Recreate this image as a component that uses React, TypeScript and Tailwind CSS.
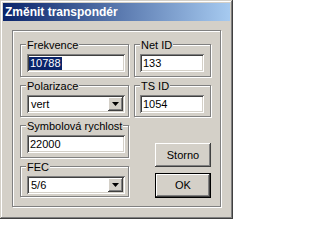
import type { ReactNode } from "react";

const etched = "border border-[#808080] shadow-[inset_1px_1px_#ffffff,1px_1px_#ffffff]";
const sunken =
  "bg-white shadow-[inset_1px_1px_#808080,inset_-1px_-1px_#ffffff,inset_2px_2px_#404040,inset_-2px_-2px_#d4d0c8]";
const raised =
  "shadow-[inset_-1px_-1px_#404040,inset_1px_1px_#ffffff,inset_-2px_-2px_#808080,inset_2px_2px_#d4d0c8]";

function Group({ label, h, children }: { label: string; h: string; children: ReactNode }) {
  return (
    <div className={`relative ${etched} ${h}`}>
      <span className="absolute -top-[6px] left-[5px] bg-[#d4d0c8] px-[1px] text-[11px] leading-[12px] text-black">
        {label}
      </span>
      {children}
    </div>
  );
}

function Edit({ value, w, ml, selected }: { value: string; w: string; ml: string; selected?: boolean }) {
  return (
    <div className={`${sunken} ${w} ${ml} mt-[9px] flex h-[18px] items-center pl-[2px] text-[11px] leading-[13px] text-black`}>
      {selected ? <span className="bg-[#0a246a] px-[1px] text-white">{value}</span> : <span className="pl-[1px]">{value}</span>}
    </div>
  );
}

function Combo({ value }: { value: string }) {
  return (
    <div className={`${sunken} ml-[6px] mt-[9px] flex h-[18px] w-[98px] items-center justify-between p-[2px] text-[11px] leading-[13px] text-black`}>
      <span className="pl-[2px]">{value}</span>
      <div className={`${raised} flex h-[14px] w-[15px] items-center justify-center bg-[#d4d0c8]`}>
        <svg width="7" height="4" viewBox="0 0 7 4">
          <polygon points="0,0 7,0 3.5,4" fill="#000" />
        </svg>
      </div>
    </div>
  );
}

function Button({ label, isDefault }: { label: string; isDefault?: boolean }) {
  return (
    <div className={`w-[56px] bg-[#d4d0c8] ${isDefault ? "h-[25px] border border-black" : "h-[24px]"}`}>
      <div className={`${raised} flex h-full w-full items-center justify-center text-[11px] text-black`}>{label}</div>
    </div>
  );
}

export default function App() {
  return (
    <div className="h-[219px] w-[233px] bg-[#d4d0c8] p-[3px] font-['Liberation_Sans',Arial,sans-serif] shadow-[inset_-1px_-1px_#404040,inset_1px_1px_#d4d0c8,inset_-2px_-2px_#808080,inset_2px_2px_#ffffff]">
      <div className="flex h-[18px] items-center bg-linear-to-r/srgb from-[#0a246a] to-[#a6caf0] pl-[2px] text-[12px] font-bold text-white">
        Změnit transpondér
      </div>
      <div className="p-[9px]">
        <div className={`${etched} flex h-[177px] w-[209px] gap-[5px] pl-[7px] pt-[13px]`}>
          <div className="flex w-[109px] flex-col gap-[8px]">
            <Group label="Frekvence" h="h-[33px]">
              <Edit value="10788" w="w-[98px]" ml="ml-[6px]" selected />
            </Group>
            <Group label="Polarizace" h="h-[32px]">
              <Combo value="vert" />
            </Group>
            <Group label="Symbolová rychlost" h="h-[33px]">
              <Edit value="22000" w="w-[98px]" ml="ml-[6px]" />
            </Group>
            <Group label="FEC" h="h-[31px]">
              <Combo value="5/6" />
            </Group>
          </div>
          <div className="flex w-[77px] flex-col">
            <Group label="Net ID" h="h-[33px]">
              <Edit value="133" w="w-[64px]" ml="ml-[5px]" />
            </Group>
            <div className="mt-[8px]">
              <Group label="TS ID" h="h-[32px]">
                <Edit value="1054" w="w-[64px]" ml="ml-[5px]" />
              </Group>
            </div>
            <div className="mt-[26px] flex flex-col items-end gap-[6px]">
              <Button label="Storno" />
              <Button label="OK" isDefault />
            </div>
          </div>
        </div>
      </div>
    </div>
  );
}
